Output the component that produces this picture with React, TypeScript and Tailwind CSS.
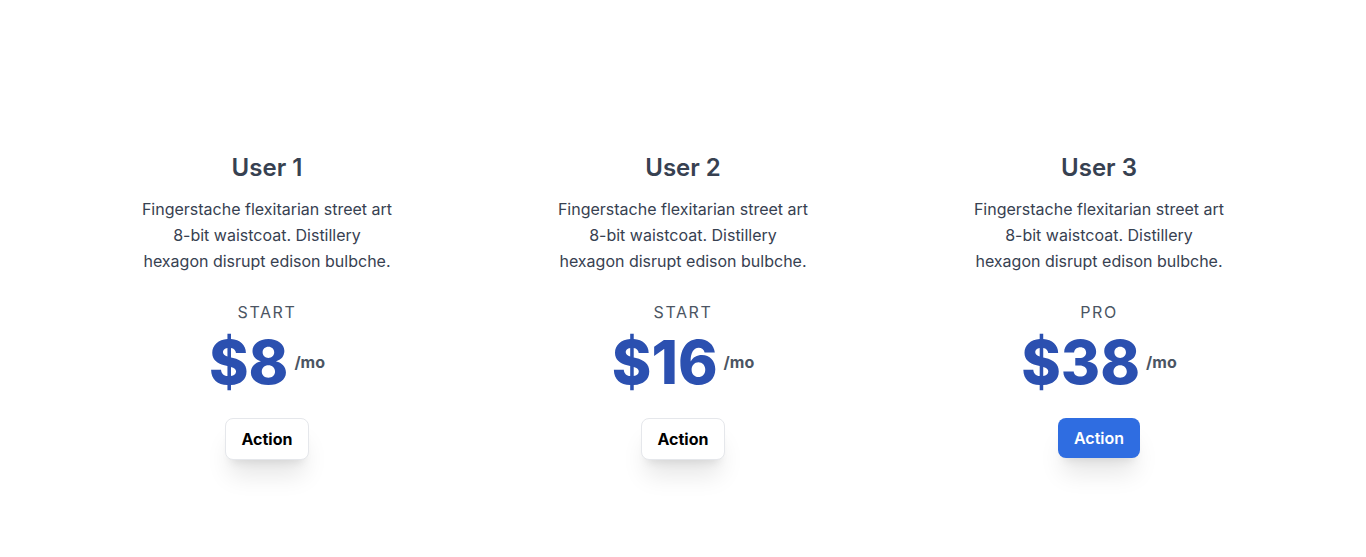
import React from "react";

interface Plan {
  name: string;
  tier: string;
  price: string;
  primary?: boolean;
}

const plans: Plan[] = [
  { name: "User 1", tier: "START", price: "$8" },
  { name: "User 2", tier: "START", price: "$16" },
  { name: "User 3", tier: "PRO", price: "$38", primary: true },
];

function PlanCard({ plan }: { plan: Plan }) {
  return (
    <div className="flex flex-col items-center text-center">
      <h2 className="text-2xl font-semibold text-[#374151]">{plan.name}</h2>
      <p className="mt-3 max-w-64 text-base leading-[26px] text-[#374151]">
        Fingerstache flexitarian street art 8-bit waistcoat. Distillery hexagon disrupt edison bulbche.
      </p>
      <div className="mt-[26px] text-base leading-6 tracking-widest text-[#4b5563]">{plan.tier}</div>
      <div className="mt-2 flex items-start">
        <span className="text-6xl leading-[60px] font-extrabold text-[#2b50b0]">{plan.price}</span>
        <span className="ml-1.5 mt-[18px] text-base font-bold text-[#4b5563]">/mo</span>
      </div>
      {plan.primary ? (
        <button className="mt-[26px] rounded-lg bg-[#2f6de1] px-4 py-2 text-base font-semibold text-white shadow-xl">
          Action
        </button>
      ) : (
        <button className="mt-[26px] rounded-lg border border-gray-200 bg-white px-4 py-2 text-base font-bold text-black shadow-xl">
          Action
        </button>
      )}
    </div>
  );
}

export default function App() {
  return (
    <div className="min-h-[557px] bg-white font-['Inter',sans-serif]">
      <section className="mx-auto max-w-7xl px-4 pt-[152px] pb-24">
        <div className="grid grid-cols-3">
          {plans.map((p) => (
            <PlanCard key={p.name} plan={p} />
          ))}
        </div>
      </section>
    </div>
  );
}
